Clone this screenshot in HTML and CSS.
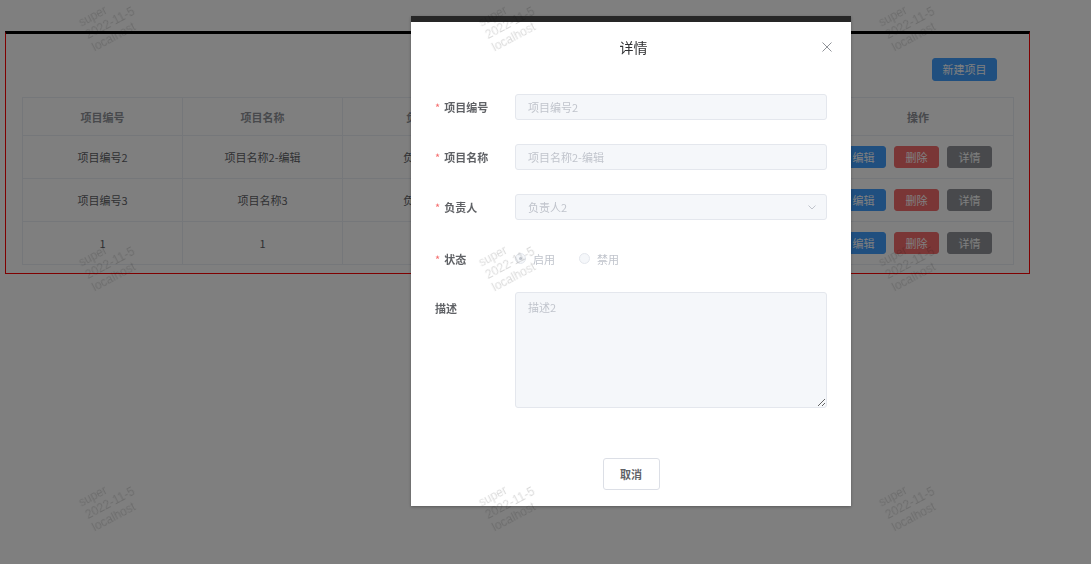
FILE: index.html
```html
<!DOCTYPE html>
<html lang="zh-CN">
<head>
<meta charset="utf-8">
<title>项目管理</title>
<link rel="stylesheet" href="styles.css">
</head>
<body>
<div class="page">
  <div class="panel">
    <div class="toolbar"><button class="btn btn-primary btn-new">新建项目</button></div>
    <table class="grid">
      <colgroup><col class="c"><col class="c"><col class="c"><col class="c"><col class="c"><col class="c-ops"></colgroup>
      <thead>
        <tr><th>项目编号</th><th>项目名称</th><th>负责人</th><th>状态</th><th>描述</th><th>操作</th></tr>
      </thead>
      <tbody>
        <tr>
          <td>项目编号2</td><td>项目名称2-编辑</td><td>负责人2</td><td>启用</td><td>描述2</td>
          <td><div class="ops"><button class="btn btn-sm btn-primary">编辑</button><button class="btn btn-sm btn-danger">删除</button><button class="btn btn-sm btn-info">详情</button></div></td>
        </tr>
        <tr>
          <td>项目编号3</td><td>项目名称3</td><td>负责人3</td><td>启用</td><td>描述3</td>
          <td><div class="ops"><button class="btn btn-sm btn-primary">编辑</button><button class="btn btn-sm btn-danger">删除</button><button class="btn btn-sm btn-info">详情</button></div></td>
        </tr>
        <tr>
          <td>1</td><td>1</td><td>1</td><td>启用</td><td>1</td>
          <td><div class="ops"><button class="btn btn-sm btn-primary">编辑</button><button class="btn btn-sm btn-danger">删除</button><button class="btn btn-sm btn-info">详情</button></div></td>
        </tr>
      </tbody>
    </table>
  </div>
</div>

<div class="mask"></div>

<div class="dialog-wrap">
  <div class="dialog">
    <div class="dialog-header">
      <span></span>
      <span class="dialog-title">详情</span>
      <button class="dialog-close" aria-label="关闭">
        <svg width="10" height="10" viewBox="0 0 10 10"><path d="M0.5 0.5 L9.5 9.5 M9.5 0.5 L0.5 9.5" stroke="#909399" stroke-width="1" fill="none"/></svg>
      </button>
    </div>
    <div class="dialog-body">
      <div class="form-row">
        <label class="form-label required">项目编号</label>
        <div class="form-control"><input class="input" readonly value="项目编号2"></div>
      </div>
      <div class="form-row">
        <label class="form-label required">项目名称</label>
        <div class="form-control"><input class="input" readonly value="项目名称2-编辑"></div>
      </div>
      <div class="form-row">
        <label class="form-label required">负责人</label>
        <div class="form-control">
          <div class="select">
            <span>负责人2</span>
            <svg width="8" height="5" viewBox="0 0 8 5"><path d="M0.5 0.5 L4 4 L7.5 0.5" stroke="#c0c4cc" stroke-width="1" fill="none"/></svg>
          </div>
        </div>
      </div>
      <div class="form-row row-radio">
        <label class="form-label required">状态</label>
        <div class="form-control radios">
          <span class="radio"><span class="radio-dot checked"></span><span class="radio-text">启用</span></span>
          <span class="radio"><span class="radio-dot"></span><span class="radio-text">禁用</span></span>
        </div>
      </div>
      <div class="form-row row-area">
        <label class="form-label">描述</label>
        <div class="form-control"><textarea class="textarea" readonly>描述2</textarea></div>
      </div>
    </div>
    <div class="dialog-footer">
      <button class="btn btn-default">取消</button>
    </div>
  </div>
</div>

<div class="watermark">
  <div class="wm"><div class="wm-text">super<br>2022-11-5<br>localhost</div></div>
  <div class="wm"><div class="wm-text">super<br>2022-11-5<br>localhost</div></div>
  <div class="wm"><div class="wm-text">super<br>2022-11-5<br>localhost</div></div>
  <div class="wm"><div class="wm-text">super<br>2022-11-5<br>localhost</div></div>
  <div class="wm"><div class="wm-text">super<br>2022-11-5<br>localhost</div></div>
  <div class="wm"><div class="wm-text">super<br>2022-11-5<br>localhost</div></div>
  <div class="wm"><div class="wm-text">super<br>2022-11-5<br>localhost</div></div>
  <div class="wm"><div class="wm-text">super<br>2022-11-5<br>localhost</div></div>
  <div class="wm"><div class="wm-text">super<br>2022-11-5<br>localhost</div></div>
</div>
</body>
</html>
```

FILE: styles.css
```css
* { box-sizing: border-box; }

html, body {
  margin: 0;
  padding: 0;
  background: #fff;
  font-family: "Noto Sans CJK SC", "Noto Sans", "Liberation Sans", sans-serif;
  overflow: hidden;
}

.page {
  padding: 31px 0 0 5px;
}

.panel {
  width: 1025px;
  border: 1px solid #ff0000;
  border-top: 3px solid #000;
  padding: 24px 16px 8px;
}

.toolbar {
  display: flex;
  justify-content: flex-end;
  padding-right: 16px;
  margin-bottom: 16px;
}

.btn {
  font-family: inherit;
  border: 1px solid transparent;
  border-radius: 3px;
  cursor: pointer;
  padding: 0;
  line-height: 1;
}

.btn-new {
  width: 65px;
  height: 23px;
  font-size: 11px;
}

.btn-primary { background: #409eff; border-color: #409eff; color: #fff; }
.btn-danger { background: #f56c6c; border-color: #f56c6c; color: #fff; }
.btn-info { background: #909399; border-color: #909399; color: #fff; }

.btn-sm {
  width: 45px;
  height: 22px;
  font-size: 11px;
}

.grid {
  width: 991px;
  border-collapse: collapse;
  table-layout: fixed;
  font-size: 11px;
  color: #606266;
}

.grid col.c { width: 160px; }
.grid col.c-ops { width: 191px; }

.grid th, .grid td {
  border: 1px solid #ebeef5;
  text-align: center;
  padding: 0;
}

.grid th {
  height: 38px;
  color: #909399;
  font-weight: 700;
}

.grid td {
  height: 43px;
}

.ops {
  display: flex;
  justify-content: center;
  gap: 8px;
  padding-right: 3px;
}

.mask {
  position: fixed;
  inset: 0;
  background: rgba(0, 0, 0, 0.5);
}

.dialog-wrap {
  position: fixed;
  inset: 0;
  display: flex;
  align-items: flex-start;
  padding: 16px 0 0 411px;
}

.dialog {
  width: 440px;
  background: #fff;
  border-top: 6px solid #262626;
  box-shadow: 0 1px 3px rgba(0, 0, 0, 0.3);
}

.dialog-header {
  display: grid;
  grid-template-columns: 1fr auto 1fr;
  align-items: center;
  padding: 15px 19px 0 24px;
}

.dialog-title {
  font-size: 14px;
  line-height: 20px;
  color: #303133;
}

.dialog-close {
  justify-self: end;
  width: 10px;
  height: 10px;
  padding: 0;
  border: 0;
  background: transparent;
  display: flex;
}

.dialog-body {
  padding: 37px 24px 0;
  display: flex;
  flex-direction: column;
  gap: 24px;
}

.form-row {
  display: flex;
  align-items: flex-start;
}

.form-label {
  width: 80px;
  flex: none;
  font-size: 11px;
  font-weight: 700;
  line-height: 26px;
  color: #606266;
}

.form-label.required::before {
  content: "*";
  color: #f56c6c;
  margin-right: 4px;
  font-weight: 400;
}

.form-control {
  flex: 1;
}

.input, .select, .textarea {
  display: block;
  width: 100%;
  height: 26px;
  border: 1px solid #e4e7ed;
  border-radius: 3px;
  background: #f5f7fa;
  font-family: inherit;
  font-size: 11px;
  color: #c0c4cc;
  padding: 0 12px;
  outline: none;
}

.select {
  display: flex;
  align-items: center;
  justify-content: space-between;
  padding-right: 10px;
}

.row-radio {
  height: 24px;
}

.row-radio .form-label {
  line-height: 24px;
  padding-top: 3px;
}

.radios {
  display: flex;
  align-items: center;
  height: 24px;
  padding-top: 5px;
  gap: 24px;
}

.radio {
  display: flex;
  align-items: center;
  gap: 7px;
  font-size: 11px;
  color: #c0c4cc;
}

.radio-dot {
  width: 11px;
  height: 11px;
  border-radius: 50%;
  border: 1px solid #e4e7ed;
  background: #f5f7fa;
  display: flex;
  align-items: center;
  justify-content: center;
}

.radio-dot.checked::after {
  content: "";
  width: 3px;
  height: 3px;
  border-radius: 50%;
  background: #c0c4cc;
}

.row-area .form-label {
  padding-top: 3px;
}

.textarea {
  height: 116px;
  padding: 5px 12px;
  line-height: 18px;
  resize: vertical;
}

.dialog-footer {
  display: flex;
  justify-content: center;
  padding: 50px 0 16px;
}

.btn-default {
  width: 57px;
  height: 32px;
  background: #fff;
  border: 1px solid #dcdfe6;
  color: #606266;
  font-size: 11px;
  font-weight: 700;
}

.watermark {
  position: fixed;
  left: -90px;
  top: -97px;
  display: grid;
  grid-template-columns: repeat(3, 400px);
  grid-auto-rows: 240px;
  pointer-events: none;
}

.wm {
  display: flex;
  align-items: center;
  justify-content: center;
}

.wm-text {
  font-family: "Liberation Sans", sans-serif;
  font-size: 12px;
  line-height: 14px;
  color: rgba(0, 0, 0, 0.15);
  transform: rotate(-28deg);
}
```
